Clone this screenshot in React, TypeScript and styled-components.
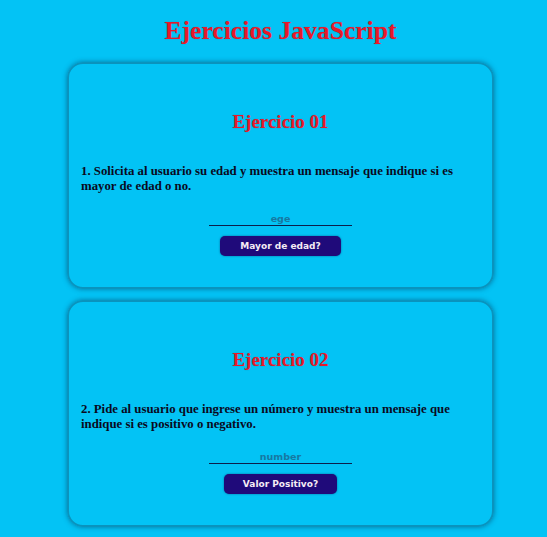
import React from "react";
import styled, { createGlobalStyle } from "styled-components";

const Global = createGlobalStyle`
  html, body { margin: 0; padding: 0; background: #03c3f5; }
  body { font-family: "Liberation Serif", "Times New Roman", serif; }
`;

const Page = styled.main`
  display: flex;
  flex-direction: column;
  align-items: center;
  padding: 14px 0 10px 14px;
  gap: 11px;
`;

const Title = styled.h1`
  margin: 0 0 3px;
  font-family: "Liberation Serif", serif;
  font-size: 25.6px;
  line-height: 34px;
  font-weight: 700;
  color: #e8182a;
  text-shadow: 0 0 1px rgba(60, 0, 0, 0.35);
`;

const Card = styled.section`
  box-sizing: border-box;
  width: 427px;
  height: 227px;
  border: 2px solid #0a93bd;
  border-radius: 16px;
  box-shadow: 0 0 5px rgba(0, 50, 90, 0.55);
  padding: 46px 12px 0;
  display: flex;
  flex-direction: column;
  align-items: center;
`;

const CardTitle = styled.h2`
  margin: 0;
  font-family: "Liberation Serif", serif;
  font-size: 19px;
  line-height: 24px;
  font-weight: 700;
  color: #e8182a;
  text-shadow: 0 0 1px rgba(60, 0, 0, 0.35);
`;

const Statement = styled.p`
  align-self: stretch;
  margin: 30px 0 0;
  font-family: "Liberation Serif", serif;
  font-size: 12.8px;
  line-height: 15px;
  font-weight: 700;
  color: #0a0a1e;
`;

const Field = styled.input`
  box-sizing: border-box;
  margin-top: 17px;
  width: 143px;
  height: 15px;
  padding: 0;
  border: none;
  border-bottom: 1.5px solid #0c1f4a;
  background: transparent;
  text-align: center;
  font-family: "DejaVu Sans", Verdana, sans-serif;
  font-size: 9.5px;
  font-weight: 700;
  outline: none;
  &::placeholder { color: #1679a2; }
`;

const Action = styled.button<{ $pad: number }>`
  margin-top: 10px;
  height: 20px;
  padding: 0 ${(p) => p.$pad}px;
  border: none;
  border-radius: 5px;
  background: #1f0a7a;
  color: #f4ecf4;
  font-family: "DejaVu Sans", Verdana, sans-serif;
  font-size: 9px;
  font-weight: 700;
  box-shadow: 0 0 2px rgba(0, 0, 60, 0.5);
`;

const exercises = [
  {
    title: "Ejercicio 01",
    text: "1. Solicita al usuario su edad y muestra un mensaje que indique si es mayor de edad o no.",
    placeholder: "ege",
    button: "Mayor de edad?",
    pad: 20,
  },
  {
    title: "Ejercicio 02",
    text: "2. Pide al usuario que ingrese un número y muestra un mensaje que indique si es positivo o negativo.",
    placeholder: "number",
    button: "Valor Positivo?",
    pad: 19,
  },
];

export default function App() {
  return (
    <>
      <Global />
      <Page>
        <Title>Ejercicios JavaScript</Title>
        {exercises.map((e) => (
          <Card key={e.title}>
            <CardTitle>{e.title}</CardTitle>
            <Statement>{e.text}</Statement>
            <Field placeholder={e.placeholder} />
            <Action $pad={e.pad}>{e.button}</Action>
          </Card>
        ))}
      </Page>
    </>
  );
}
